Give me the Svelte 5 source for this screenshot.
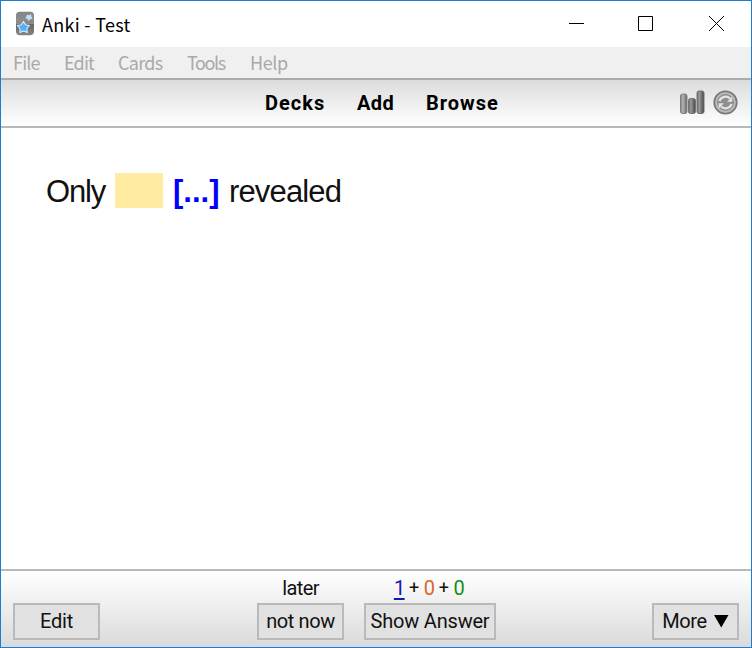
<script>
  const menus = [
    { label: 'File', width: 51, spacing: -0.8 },
    { label: 'Edit', width: 54, spacing: -0.8 },
    { label: 'Cards', width: 69, spacing: -0.7 },
    { label: 'Tools', width: 63, spacing: -1.4 },
    { label: 'Help', width: 50, spacing: -0.4 }
  ];
</script>

<div class="window">
  <header class="title">
    <svg class="logo" width="20" height="25" viewBox="0 0 20 25">
      <defs>
        <linearGradient id="logo-bg" x2="0" y2="1">
          <stop stop-color="#777" /><stop offset=".5" stop-color="#8b8b8b" /><stop offset=".52" stop-color="#666" /><stop offset="1" stop-color="#858585" />
        </linearGradient>
      </defs>
      <rect x="1" y=".8" width="18" height="23.4" rx="4" fill="url(#logo-bg)" />
      <path d="M1 11C8 12 13 8 19 10V5Q19 1 15 1H5Q1 1 1 5Z" fill="#929292" opacity=".55" />
      <path d="m8.500 10.500 1.900 3.200 4 .8-2.600 2.900.5 4-3.800-1.500-3.600 1.700.1-4.100-2.700-3 4.100-.8Z" fill="#4db0f8" stroke="#d8efff" stroke-width="1.100" stroke-linejoin="round" />
      <path d="m12 4 2 .7 1.800-1.200.2 2.300 1.200 1.500-2.200.6-1.300 1.600-1.100-1.900-2-.8 1.500-1.400Z" fill="#b9e2ff" stroke="#dceefa" stroke-width=".6" />
    </svg>
    <span class="name">Anki - Test</span>
    <svg class="controls" width="160" height="20" viewBox="0 0 160 20" fill="none" stroke="#000">
      <path d="M1 8.500h15M70.500 1.500h14v14h-14ZM141 1l15 15M156 1l-15 15" />
    </svg>
  </header>

  <nav class="menu">
    {#each menus as m}
      <span style="width:{m.width}px;letter-spacing:{m.spacing}px">{m.label}</span>
    {/each}
  </nav>

  <div class="toolbar">
    <div class="links"><b class="decks">Decks</b><b class="add">Add</b><b class="browse">Browse</b></div>
    <svg class="tools" width="60" height="28" viewBox="0 0 60 28">
      <defs>
        <linearGradient id="bar"><stop stop-color="#777" /><stop offset=".35" stop-color="#b5b5b5" /><stop offset="1" stop-color="#666" /></linearGradient>
        <linearGradient id="bar-dark"><stop stop-color="#6c6c6c" /><stop offset=".35" stop-color="#999" /><stop offset="1" stop-color="#444" /></linearGradient>
      </defs>
      <rect x="1.500" y="5" width="6.500" height="19.500" rx="2" fill="url(#bar)" stroke="#808080" />
      <rect x="9.500" y="9.500" width="7" height="15" rx="2" fill="url(#bar-dark)" stroke="#747474" />
      <rect x="18" y="2" width="7" height="22.500" rx="2" fill="url(#bar-dark)" stroke="#707070" />
      <circle cx="46.500" cy="13.500" r="11.300" fill="#b2b2b2" stroke="#777" stroke-width="1.600" />
      <circle cx="46.500" cy="13.500" r="9" fill="#8e8e8e" stroke="#c2c2c2" />
      <path d="M40.500 12a6.300 6 0 0 1 10.500-2.500M52.500 15a6.300 6 0 0 1-10.500 2.500" fill="none" stroke="#e4e4e4" stroke-width="2.300" />
      <path d="M53.300 7.500v5.200h-5.300ZM39.700 19.500v-5.200h5.300Z" fill="#e4e4e4" />
    </svg>
  </div>

  <main><span class="only">Only</span><span class="blank"></span><b>[...]</b><span class="revealed">revealed</span></main>

  <footer>
    <button class="edit">Edit</button>
    <div class="group defer"><span class="later">later</span><button><span>not now</span></button></div>
    <div class="group answer">
      <span class="counts"><u>1</u><i>+</i><em>0</em><i>+</i><strong>0</strong></span>
      <button><span>Show Answer</span></button>
    </div>
    <button class="more">More<svg width="15" height="13" viewBox="0 0 15 13"><path d="M0 0h14.500L7.250 12.500Z" /></svg></button>
  </footer>
</div>

<style>
  :global(body) { margin: 0; overflow: hidden; }
  .window { box-sizing: border-box; width: 752px; height: 648px; border: 1px solid #1a7fd4; background: #fff; display: flex; flex-direction: column; font-family: Roboto, sans-serif; color: #111; white-space: nowrap; }
  .title { height: 46px; display: flex; align-items: flex-start; flex: none; }
  .logo { margin: 10px 0 0 14px; }
  .name { margin-left: 7px; padding-top: 11px; font: 18px/25px "Noto Sans CJK KR", sans-serif; letter-spacing: .3px; color: #000; }
  .controls { margin: 14px 23px 0 auto; }
  .menu { height: 31px; flex: none; padding-left: 12px; background: #f0f0f0; display: flex; font: 18px/31px "Noto Sans CJK KR", sans-serif; color: #a9a9a9; }
  .toolbar { box-sizing: border-box; height: 50px; flex: none; border-top: 2px solid #ababab; border-bottom: 2px solid #b9b9b9; background: linear-gradient(#dcdcdc, #fff); display: flex; }
  .links { display: flex; padding-left: 264px; font-size: 20px; line-height: 46px; color: #000; }
  .decks { width: 92px; letter-spacing: 1px; }
  .add { width: 69px; letter-spacing: .4px; }
  .browse { letter-spacing: 1px; }
  .tools { margin: 9px 12px 0 auto; }
  main { flex: 1; display: flex; align-items: flex-start; padding: 45px 0 0 45px; font: 31px/37px "Liberation Sans", sans-serif; }
  .only { width: 69px; letter-spacing: -1.200px; }
  .blank { width: 48px; height: 35px; background: #ffeba2; margin-right: 10px; }
  main b { color: #00f; width: 56px; }
  .revealed { letter-spacing: -.85px; }
  footer { height: 76px; flex: none; border-top: 2px solid #b9b9b9; background: linear-gradient(#fff, #dadada); display: flex; align-items: flex-start; font-size: 20px; }
  button { box-sizing: border-box; width: 87px; height: 37px; padding: 0; border: 1px solid #b9b9b9; box-shadow: inset 0 0 0 1px #bababa; background: #e1e1e1; font: 20px/33px Roboto, sans-serif; color: #111; white-space: nowrap; }
  .edit { margin: 32px 0 0 12px; letter-spacing: -.2px; }
  .group { display: flex; flex-direction: column; align-items: center; }
  .group > span { height: 32px; line-height: 34px; }
  .defer { width: 87px; margin-left: 157px; }
  .later { letter-spacing: -.6px; }
  .defer button { letter-spacing: -.4px; }
  .answer { width: 132px; margin-left: 20px; }
  .answer button { width: 132px; letter-spacing: -.2px; }
  .counts { display: flex; justify-content: center; margin-left: -2px; }
  u { color: #1b16b0; text-underline-offset: 3px; }
  i { font-style: normal; width: 19px; text-align: center; font-size: 18px; }
  em { font-style: normal; color: #d8662c; }
  strong { font-weight: 400; color: #168c16; }
  .counts em, .counts strong, .counts u { letter-spacing: -.5px; }
  .more { margin: 32px 12px 0 auto; display: flex; align-items: center; justify-content: center; letter-spacing: -.4px; }
  .more svg { margin-left: 7px; }
</style>
